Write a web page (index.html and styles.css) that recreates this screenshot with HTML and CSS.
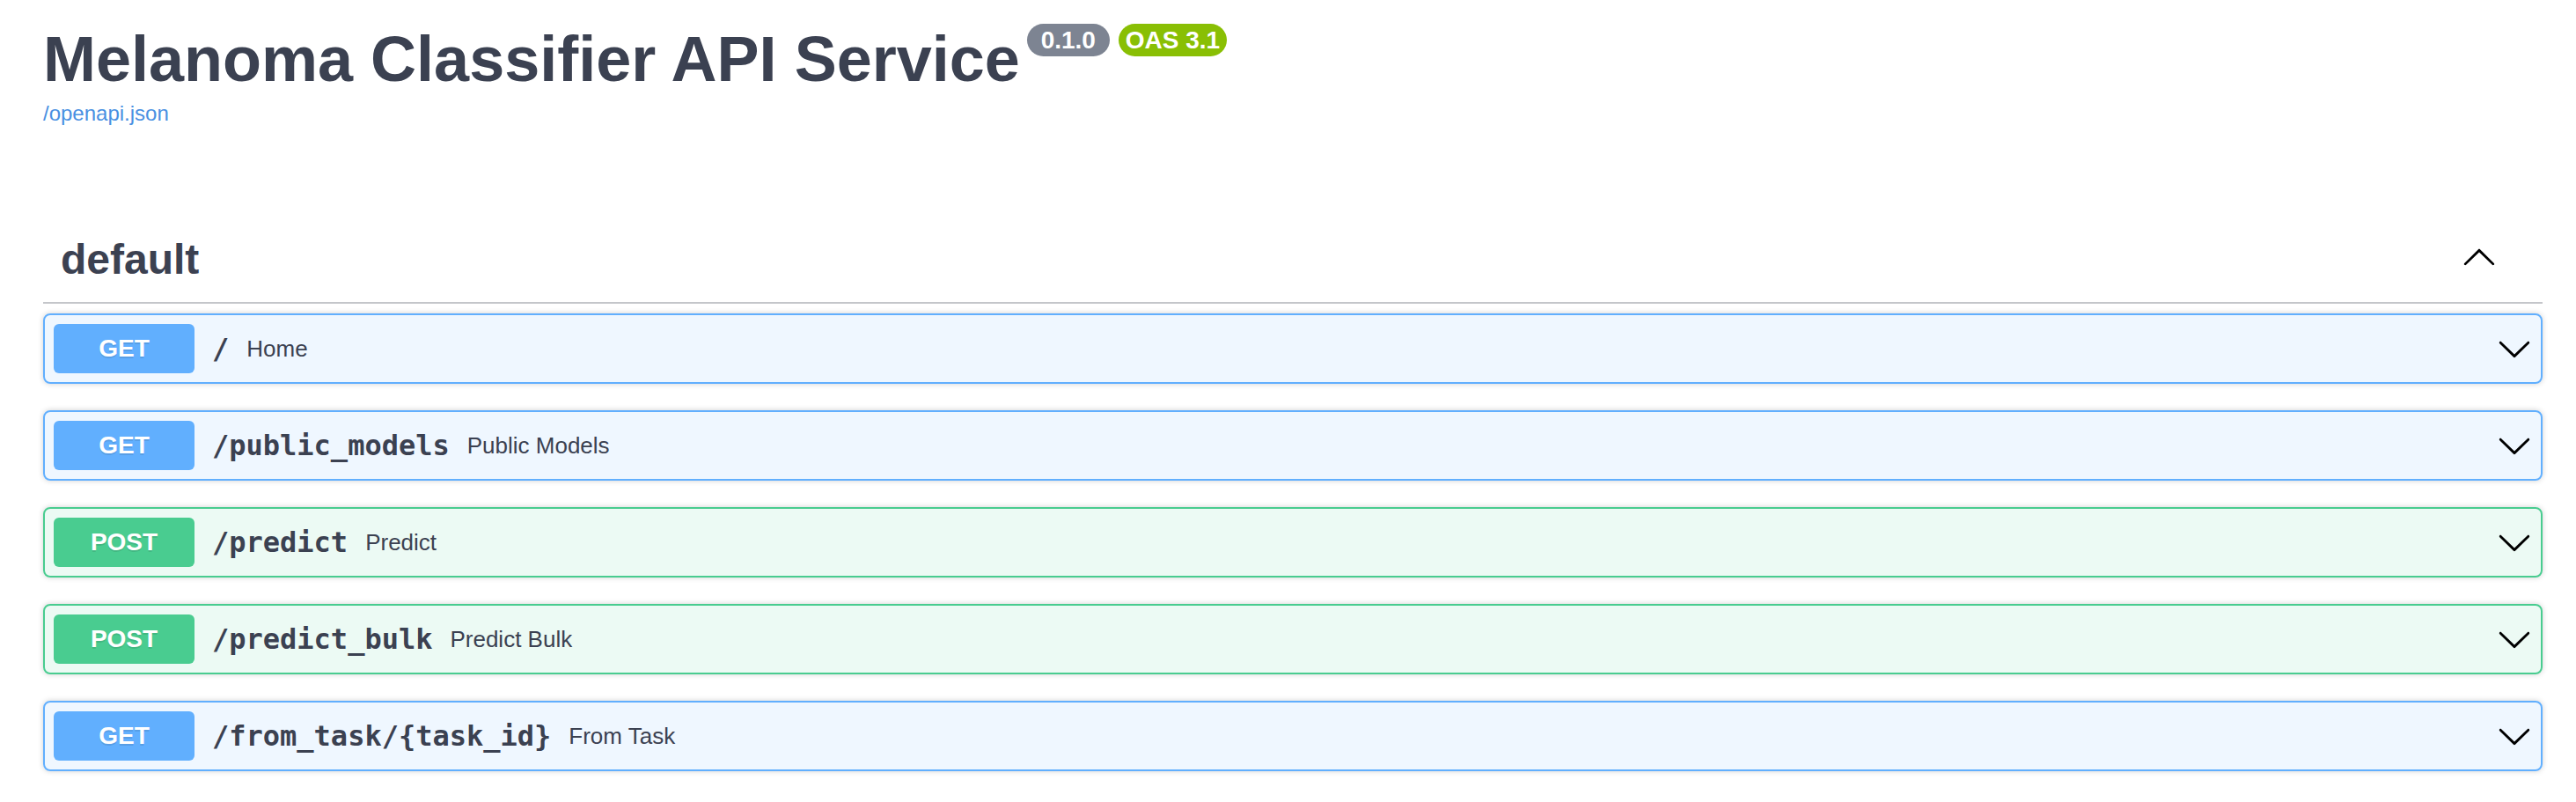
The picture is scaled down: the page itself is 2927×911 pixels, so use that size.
FILE: index.html
```html
<!DOCTYPE html>
<html lang="en">
<head>
<meta charset="utf-8">
<title>Melanoma Classifier API Service - Swagger UI</title>
<link rel="stylesheet" href="styles.css">
</head>
<body>
<div class="page">
  <div class="info">
    <hgroup class="main">
      <h2 class="title"><span class="title-text">Melanoma Classifier API Service</span><small class="badge"><pre class="version"> 0.1.0 </pre></small><small class="badge oas"><pre class="version">OAS 3.1</pre></small></h2>
      <div class="link-row"><a class="link" href="#">/openapi.json</a></div>
    </hgroup>
  </div>

  <section class="tag-section">
    <h3 class="tag">
      <span class="tag-name">default</span>
      <span class="expand">
        <svg class="arrow" viewBox="0 0 20 20" width="40" height="40"><path d="M17.418 14.908c.272.268.709.268.979 0s.271-.701 0-.969l-7.908-7.83c-.27-.268-.707-.268-.979 0l-7.908 7.83c-.27.268-.27.701 0 .969.271.268.709.268.979 0L10 7.767l7.418 7.141z"/></svg>
      </span>
    </h3>

    <div class="op get">
      <div class="summary">
        <span class="method">GET</span>
        <span class="path">/</span>
        <span class="desc">Home</span>
        <svg class="arrow" viewBox="0 0 20 20" width="40" height="40"><path d="M17.418 6.109c.272-.268.709-.268.979 0s.271.701 0 .969l-7.908 7.83c-.27.268-.707.268-.979 0l-7.908-7.83c-.27-.268-.27-.701 0-.969.271-.268.709-.268.979 0L10 13.25l7.418-7.141z"/></svg>
      </div>
    </div>

    <div class="op get">
      <div class="summary">
        <span class="method">GET</span>
        <span class="path">/public_models</span>
        <span class="desc">Public Models</span>
        <svg class="arrow" viewBox="0 0 20 20" width="40" height="40"><path d="M17.418 6.109c.272-.268.709-.268.979 0s.271.701 0 .969l-7.908 7.83c-.27.268-.707.268-.979 0l-7.908-7.83c-.27-.268-.27-.701 0-.969.271-.268.709-.268.979 0L10 13.25l7.418-7.141z"/></svg>
      </div>
    </div>

    <div class="op post">
      <div class="summary">
        <span class="method">POST</span>
        <span class="path">/predict</span>
        <span class="desc">Predict</span>
        <svg class="arrow" viewBox="0 0 20 20" width="40" height="40"><path d="M17.418 6.109c.272-.268.709-.268.979 0s.271.701 0 .969l-7.908 7.83c-.27.268-.707.268-.979 0l-7.908-7.830c-.27-.268-.27-.701 0-.969.271-.268.709-.268.979 0L10 13.25l7.418-7.141z"/></svg>
      </div>
    </div>

    <div class="op post">
      <div class="summary">
        <span class="method">POST</span>
        <span class="path">/predict_bulk</span>
        <span class="desc">Predict Bulk</span>
        <svg class="arrow" viewBox="0 0 20 20" width="40" height="40"><path d="M17.418 6.109c.272-.268.709-.268.979 0s.271.701 0 .969l-7.908 7.83c-.27.268-.707.268-.979 0l-7.908-7.83c-.27-.268-.27-.701 0-.969.271-.268.709-.268.979 0L10 13.25l7.418-7.141z"/></svg>
      </div>
    </div>

    <div class="op get">
      <div class="summary">
        <span class="method">GET</span>
        <span class="path">/from_task/{task_id}</span>
        <span class="desc">From Task</span>
        <svg class="arrow" viewBox="0 0 20 20" width="40" height="40"><path d="M17.418 6.109c.272-.268.709-.268.979 0s.271.701 0 .969l-7.908 7.83c-.27.268-.707.268-.979 0l-7.908-7.83c-.27-.268-.27-.701 0-.969.271-.268.709-.268.979 0L10 13.25l7.418-7.141z"/></svg>
      </div>
    </div>
  </section>
</div>
</body>
</html>
```

FILE: styles.css
```css
html, body {
  margin: 0;
  padding: 0;
  background: #fff;
}

body {
  font-family: "Liberation Sans", Arial, sans-serif;
  color: #3b4151;
}

.page {
  padding: 0 38px 0 49px;
}

.info {
  margin: 0;
}

.main {
  margin: 0;
}

.title {
  display: flex;
  align-items: flex-start;
  margin: 26px 0 0 0;
  font-family: "Liberation Sans", Arial, sans-serif;
  font-size: 72px;
  line-height: 82px;
  font-weight: 700;
  color: #3b4151;
}

.badge {
  display: inline-block;
  margin: 1px 0 0 8px;
  padding: 2px 8px;
  background: #7d8492;
  border-radius: 114px;
}

.badge.oas {
  margin-left: 10px;
  background: #89bf04;
}

.version {
  margin: 0;
  padding: 0;
  font-family: "Liberation Sans", Arial, sans-serif;
  font-size: 28px;
  line-height: 33px;
  font-weight: 700;
  color: #fff;
  white-space: pre;
}

.link-row {
  margin-top: 7px;
  font-size: 24px;
  line-height: 28px;
}

.link {
  color: #4990e2;
  text-decoration: none;
  font-family: "Liberation Sans", Arial, sans-serif;
}

.tag-section {
  display: flex;
  flex-direction: column;
  margin-top: 104px;
}

.tag {
  display: flex;
  align-items: center;
  margin: 0 0 11px 0;
  padding: 20px 20px 21px 20px;
  border-bottom: 2px solid rgba(59, 65, 81, 0.3);
  font-family: "Liberation Sans", Arial, sans-serif;
  font-size: 48px;
  line-height: 55px;
  font-weight: 700;
  color: #3b4151;
}

.tag-name {
  flex: 1 1 auto;
}

.expand {
  display: flex;
  margin: -8px 32px 0 0;
}

.arrow {
  display: block;
  flex: 0 0 auto;
  fill: #000;
}

.op {
  margin: 0 0 30px 0;
  border: 2px solid #000;
  border-radius: 8px;
  box-shadow: 0 0 6px rgba(0, 0, 0, 0.19);
}

.op.get {
  background: rgba(97, 175, 254, 0.1);
  border-color: #61affe;
}

.op.post {
  background: rgba(73, 204, 144, 0.1);
  border-color: #49cc90;
}

.summary {
  display: flex;
  align-items: center;
  padding: 10px;
}

.method {
  min-width: 160px;
  padding: 12px 0;
  border-radius: 6px;
  font-family: "Liberation Sans", Arial, sans-serif;
  font-size: 28px;
  line-height: 32px;
  font-weight: 700;
  color: #fff;
  text-align: center;
  text-shadow: 0 2px 0 rgba(0, 0, 0, 0.1);
}

.get .method {
  background: #61affe;
}

.post .method {
  background: #49cc90;
}

.path {
  padding: 0 20px;
  font-family: "DejaVu Sans Mono", monospace;
  font-size: 32px;
  font-weight: 700;
  color: #3b4151;
}

.desc {
  flex: 1 1 auto;
  font-family: "Liberation Sans", Arial, sans-serif;
  font-size: 26px;
  color: #3b4151;
}
```
